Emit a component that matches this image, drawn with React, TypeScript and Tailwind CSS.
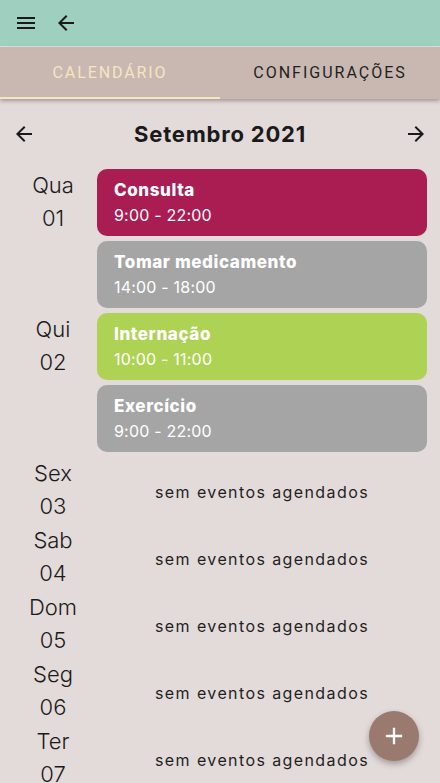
import React from "react";

const font = { fontFamily: "Inter, 'Noto Sans', sans-serif" };

type Ev = { title: string; time: string; color: string };
type Day = { wd: string; d: string; events: Ev[] };

const days: Day[] = [
  {
    wd: "Qua",
    d: "01",
    events: [
      { title: "Consulta", time: "9:00 - 22:00", color: "bg-[#a91d52]" },
      { title: "Tomar medicamento", time: "14:00 - 18:00", color: "bg-[#a5a5a5]" },
    ],
  },
  {
    wd: "Qui",
    d: "02",
    events: [
      { title: "Internação", time: "10:00 - 11:00", color: "bg-[#aed254]" },
      { title: "Exercício", time: "9:00 - 22:00", color: "bg-[#a5a5a5]" },
    ],
  },
  { wd: "Sex", d: "03", events: [] },
  { wd: "Sab", d: "04", events: [] },
  { wd: "Dom", d: "05", events: [] },
  { wd: "Seg", d: "06", events: [] },
  { wd: "Ter", d: "07", events: [] },
];

function Arrow({ dir }: { dir: "left" | "right" }) {
  return (
    <svg width="24" height="24" viewBox="0 0 24 24" className={dir === "right" ? "rotate-180" : ""}>
      <path d="M20 11H7.83l5.59-5.59L12 4l-8 8 8 8 1.41-1.41L7.83 13H20v-2z" fill="#1a1a1a" />
    </svg>
  );
}

export default function App() {
  return (
    <div className="relative w-[440px] h-[783px] overflow-hidden bg-[#e3dbd9]" style={font}>
      {/* App bar */}
      <div className="h-[47px] bg-[#9fd0bf] flex items-center pl-[14px] gap-[16px] border-b border-[#d8e6e0]">
        <svg width="24" height="24" viewBox="0 0 24 24">
          <path d="M3 18h18v-2H3v2zm0-5h18v-2H3v2zm0-7v2h18V6H3z" fill="#1a1a1a" />
        </svg>
        <Arrow dir="left" />
      </div>
      {/* Tabs */}
      <div className="relative h-[52px] bg-[#c9b8b1] flex shadow-[0_2px_4px_rgba(0,0,0,0.3)] z-10" style={{ fontFamily: "Roboto, sans-serif" }}>
        <div className="w-1/2 flex items-center justify-center text-[16px] tracking-[1.9px] text-[#f5e6c0] relative">
          CALENDÁRIO
          <div className="absolute left-0 right-0 bottom-0 h-[2px] bg-[#f5e6c0]" />
        </div>
        <div className="w-1/2 flex items-center justify-center text-[16px] tracking-[2px] text-[#1f1f1f]">
          CONFIGURAÇÕES
        </div>
      </div>
      {/* Month header */}
      <div className="flex items-center justify-between px-[12px] pt-[21px] pb-[21px]">
        <Arrow dir="left" />
        <div className="text-[22px] font-bold text-[#1a1a1a] leading-[28px] tracking-[0.8px]">Setembro 2021</div>
        <Arrow dir="right" />
      </div>
      {/* Days */}
      <div className="flex flex-col pl-[9px] pr-[13px]">
        {days.map((day) => (
          <div key={day.d} className={day.events.length > 0 ? "flex pb-[5px]" : "flex h-[67px]"}>
            <div className="w-[88px] shrink-0 flex flex-col items-center text-[22px] font-light text-[#1a1a1a] leading-[33px]">
              <span>{day.wd}</span>
              <span>{day.d}</span>
            </div>
            {day.events.length > 0 ? (
              <div className="flex-1 flex flex-col gap-[5px]">
                {day.events.map((e) => (
                  <div key={e.title} className={`${e.color} h-[67px] rounded-[10px] pl-[17px] pt-[9px] text-white`}>
                    <div className="text-[17px] font-extrabold leading-[24px] tracking-[0.6px]">{e.title}</div>
                    <div className="text-[16px] leading-[26px] tracking-[0.2px]">{e.time}</div>
                  </div>
                ))}
              </div>
            ) : (
              <div className="flex-1 flex items-center justify-center text-[16px] text-[#1f1f1f] tracking-[1.4px] pt-[3px]">
                sem eventos agendados
              </div>
            )}
          </div>
        ))}
      </div>
      {/* FAB */}
      <div className="absolute left-[369px] top-[711px] w-[50px] h-[50px] rounded-full bg-[#9a7a6f] shadow-[0_3px_6px_rgba(0,0,0,0.3)] flex items-center justify-center">
        <svg width="28" height="28" viewBox="0 0 24 24">
          <path d="M19 13h-6v6h-2v-6H5v-2h6V5h2v6h6v2z" fill="#ffffff" />
        </svg>
      </div>
    </div>
  );
}
